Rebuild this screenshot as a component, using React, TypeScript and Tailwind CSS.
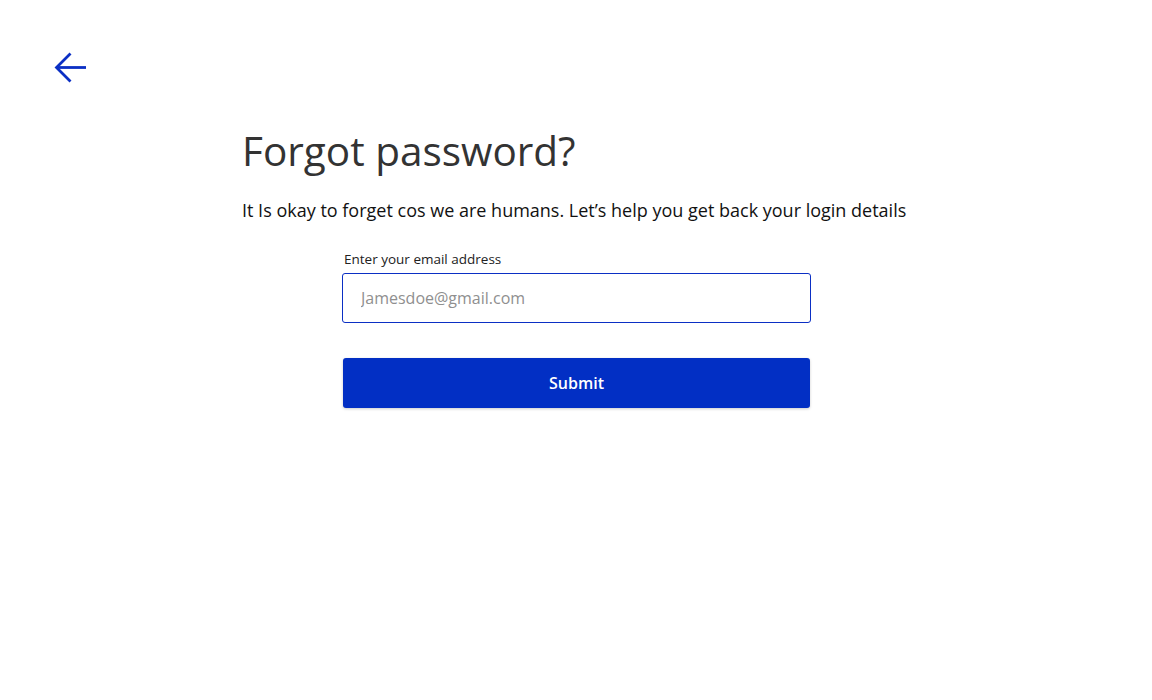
export default function App() {
  return (
    <div className="min-h-[700px] bg-white font-['Open_Sans','Noto_Sans',sans-serif]">
      <div className="px-[54px] pt-[52px]">
        <button className="block text-[#0b2fc4]">
          <svg width="33" height="31" viewBox="0 0 33 31" fill="none" stroke="currentColor" strokeWidth="2.8">
            <path d="M32 15.5H2.5" />
            <path d="M16.5 1.5 2.5 15.5 16.5 29.5" />
          </svg>
        </button>
      </div>
      <div className="pl-[242px] pt-[44px]">
        <h1 className="text-[40.5px] leading-[48px] text-[#333333]">Forgot password?</h1>
        <p className="mt-[23px] text-[18px] leading-[24px] text-[#111111]">
          It Is okay to forget cos we are humans. Let’s help you get back your login details
        </p>
        <form className="ml-[100px] mt-[28px] flex w-[469px] flex-col">
          <label className="pl-[2px] text-[13.5px] leading-[18px] text-[#222222]">Enter your email address</label>
          <input
            className="mt-[5px] h-[50px] rounded-[3px] border border-[#0b2fc4] px-[18px] text-[16px] text-[#333] outline-none placeholder:text-[#8f8f8f]"
            placeholder="Jamesdoe@gmail.com"
          />
          <button
            type="button"
            className="ml-[1px] mt-[35px] h-[50px] w-[467px] rounded-[3px] bg-[#022fc4] text-[16px] font-semibold text-white shadow-[0_1px_3px_rgba(0,0,0,0.2)]"
          >
            Submit
          </button>
        </form>
      </div>
    </div>
  );
}
